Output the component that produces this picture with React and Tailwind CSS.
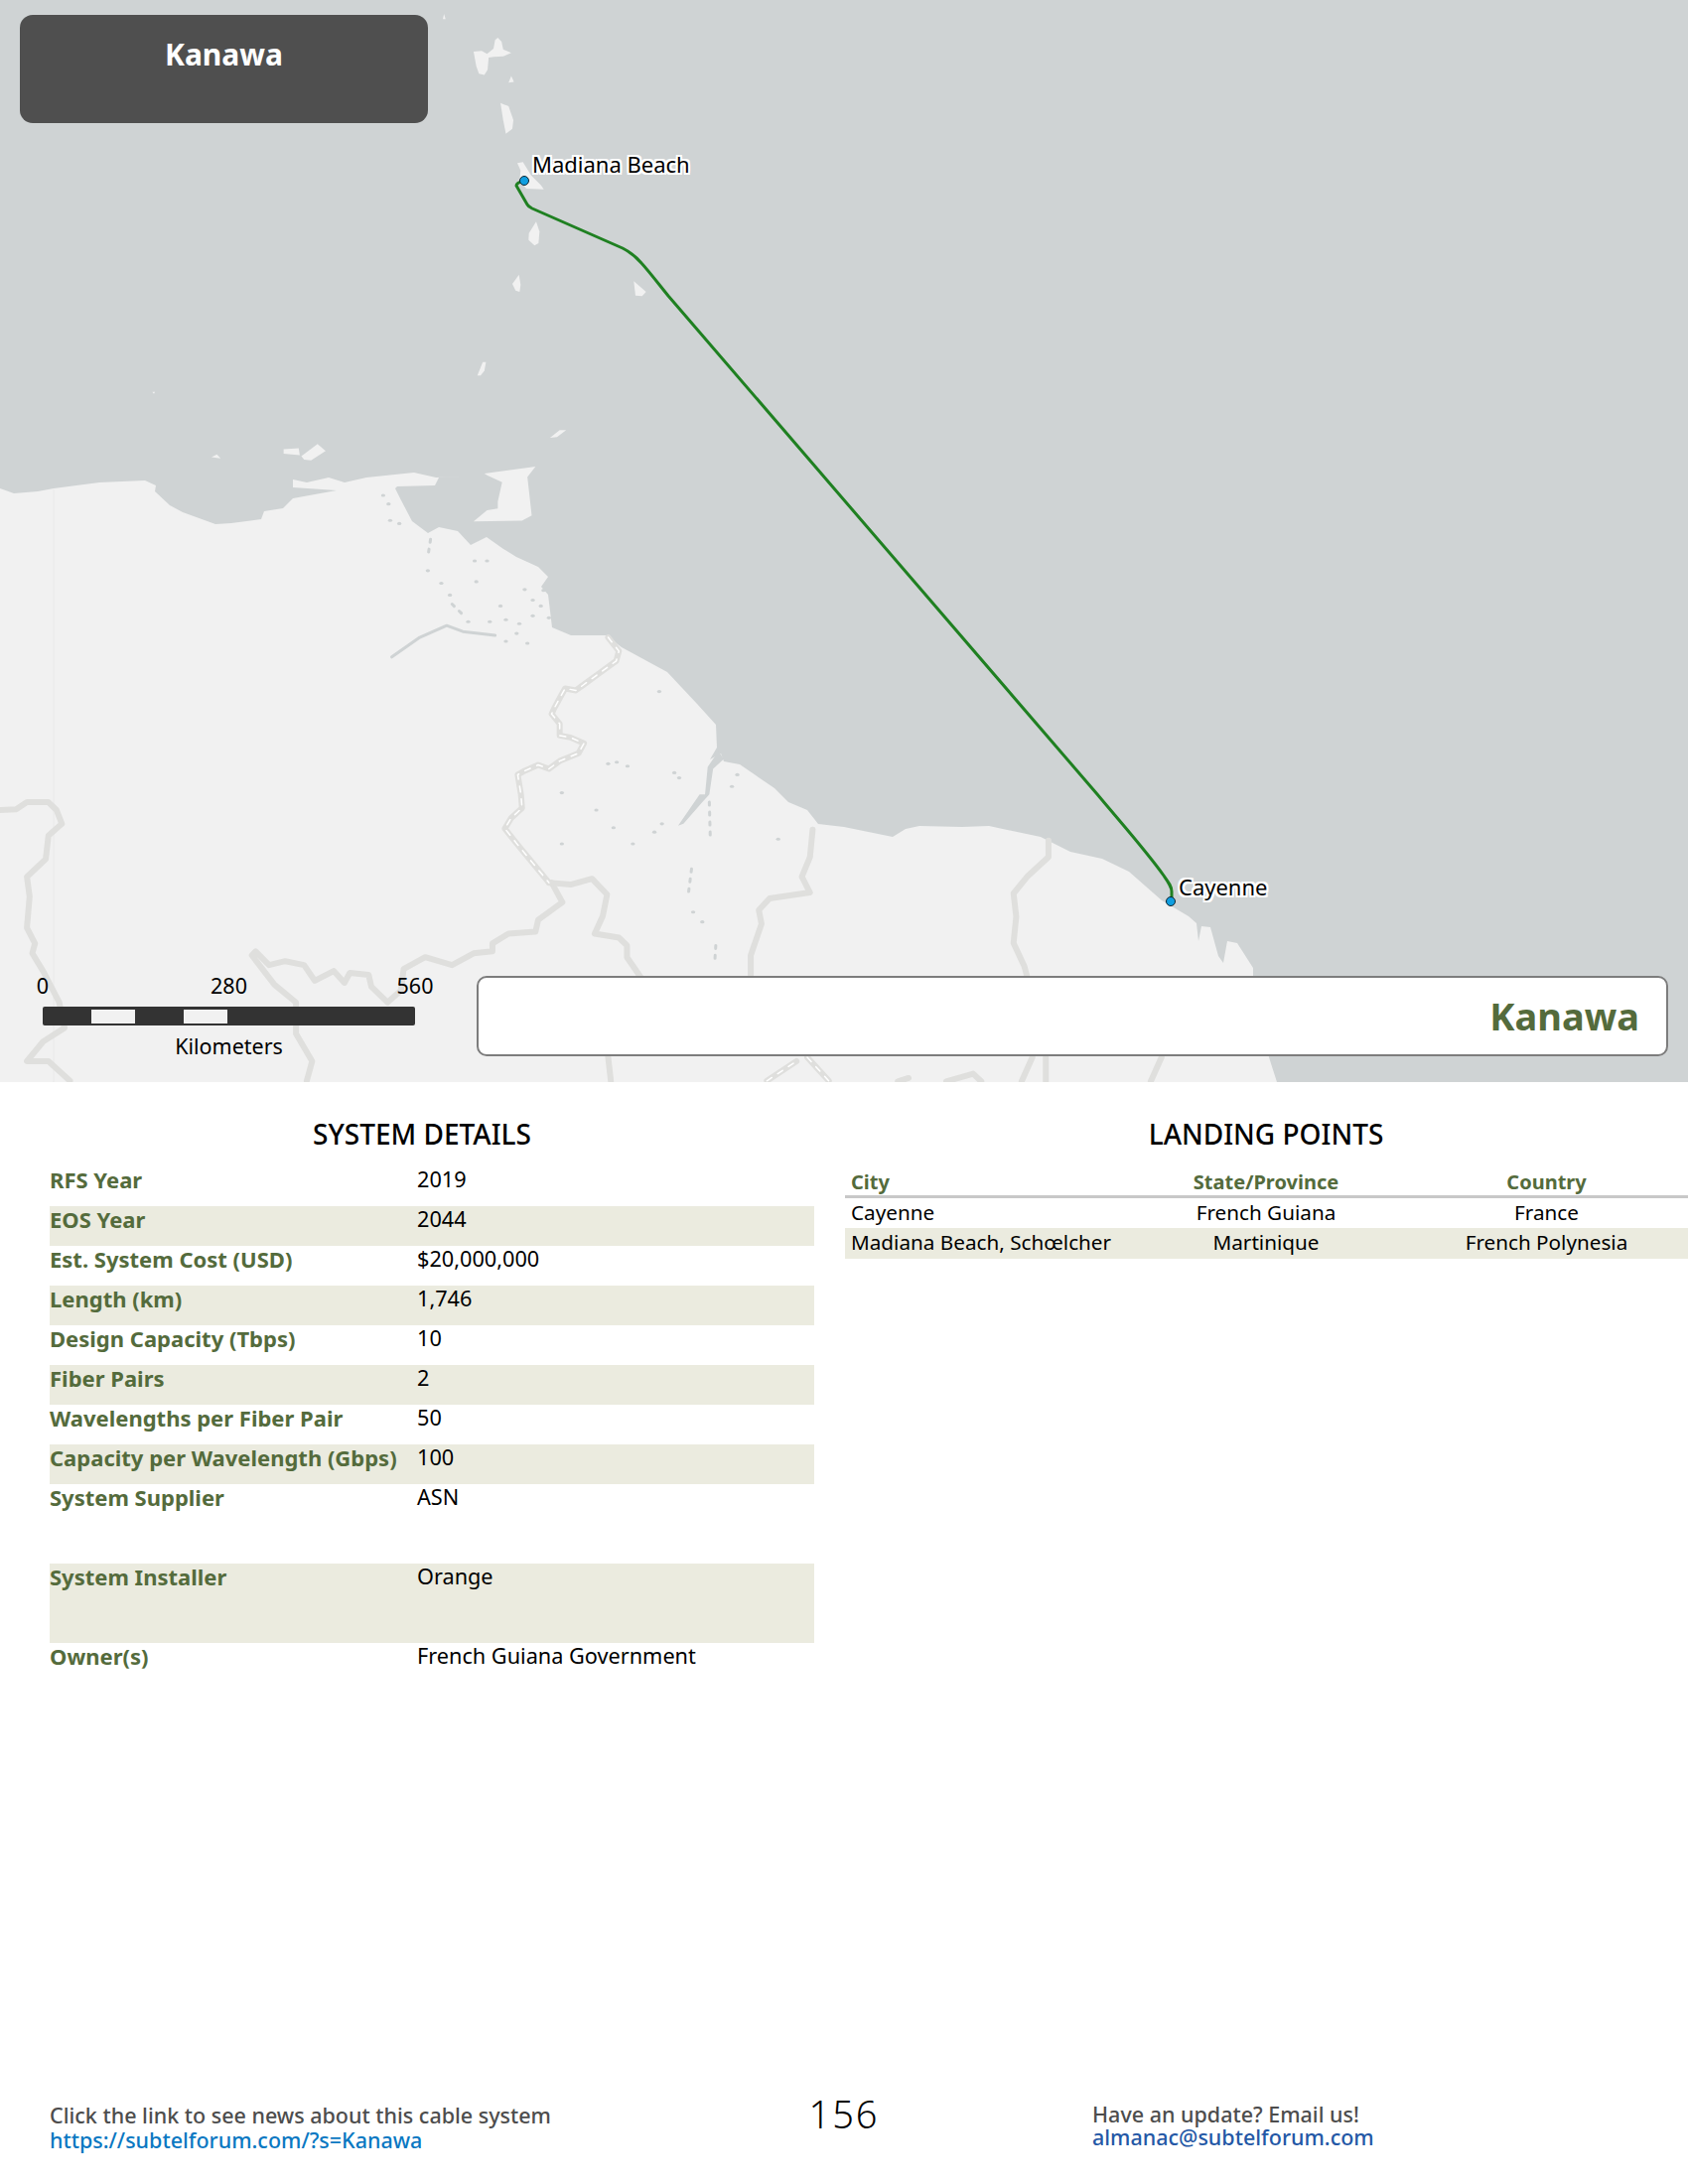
import React from 'react';

const FONT = "font-['Noto_Sans','Lato',sans-serif]";

// the drawn map is traced from three zoomed crops, so each group keeps the crop's own coordinates
const CROP_A = 'scale(0.542 0.3508)';
const CROP_B = 'translate(0 480) scale(0.542 0.3953)';
const CROP_C = 'translate(850 800) scale(0.542 0.3333)';
const CROP_D = 'translate(480 20) scale(0.3333)';

const SEA = '#cfd3d4';
const LAND = '#f1f1f1';
const BORDER = '#dfdfdd';

const mainland =
  'M0,492 L14,497 38,495 54,492 100,486 146,484 157,489 156,495 171,509 184,516 217,528 233,527 263,523 266,515 285,512 295,502 339,494 295,491 295,483 309,486 331,481 347,486 369,481 417,476 439,481 467,480 442,481 438,489 400,490 398,492 404,504 415,525 431,537 442,531 461,535 474,549 490,541 507,553 520,561 542,571 552,581 545,591 552,599 556,632 575,640 610,640 626,652 672,677 702,709 721,730 722,753 715,765 726,759 729,767 745,770 780,794 794,808 813,816 824,830 850,833 899,843 912,835 926,832 969,833 996,832 1048,843 1078,858 1110,865 1137,878 1170,907 1197,923 1205,930 1207,948 1210,933 1219,934 1227,963 1232,970 1236,948 1246,950 1262,975 1262,983 1278,1065 1286,1090 0,1090 Z';

const islandsA = [
  '825,40 828,55 823,55',
  '925,108 932,120 935,142 950,152 935,162 918,163 908,165 906,200 900,215 890,212 885,190 880,148 895,146 905,155 917,140 920,115',
  '950,218 955,235 945,237',
  '930,296 945,305 954,345 952,370 940,384 935,345',
  '1022,1257 1040,1235 1052,1235 1035,1255',
  '527,1290 555,1287 557,1307 527,1303',
  '560,1310 590,1275 605,1295 578,1322 565,1320',
  '393,1313 403,1305 410,1316',
  '887,1078 897,1040 903,1040 900,1065 893,1078',
  '900,1360 995,1340 980,1370 988,1480 970,1495 880,1497 905,1465 925,1460 925,1440 933,1385 905,1365',
  '283,1125 288,1125 286,1131',
];

const islandsD = [
  '123,433 140,430 165,470 195,500 203,512 150,510 130,485 133,455',
  '180,610 190,640 187,675 175,682 157,665 158,645',
  '128,770 133,800 130,822 118,818 108,798',
  '475,790 512,822 500,835 480,833',
];

const borders = [
  'M1025,1035 L1045,1085 1000,1130 995,1160 945,1165 915,1190 915,1210 880,1215 840,1245 790,1225 750,1255 745,1310 720,1340 690,1300 685,1270 650,1265 640,1290 620,1260 585,1285 565,1245 530,1235 500,1245 475,1210 468,1220 510,1295 550,1340 550,1420 580,1490 570,1540',
  'M0,850 L30,848 50,830 90,830 105,850 115,885 90,915 85,975 50,1020 55,1070 50,1150 65,1190 60,1215 80,1260 110,1340 120,1405 80,1440 50,1490 90,1490 130,1540',
  'M1020,1035 L1060,1040 1100,1025 1128,1065 1120,1120 1105,1165 1150,1175 1165,1195 1165,1225 1190,1275',
  'M1130,1480 L1135,1540',
  'M1510,900 L1505,970 1490,1020 1505,1060 1430,1075 1410,1105 1415,1140 1395,1220 1395,1270',
];

const dashedBorders = [
  'M1130,410 L1150,445 1145,470 1115,500 1085,530 1070,545 1050,540 1030,590 1025,605 1040,630 1040,660 1060,665 1085,680 1075,705 1040,725 1020,745 1000,735 975,750 962,760 968,810 970,845 950,870 938,897 960,935 990,985 1020,1035',
  'M1425,1540 L1480,1490',
  'M1500,1480 L1540,1540',
];

const bordersC = [
  'M380,140 L380,190 340,250 315,300 320,370 315,450 335,520 340,550',
  'M590,795 L570,868',
  'M350,795 L330,868',
  'M375,795 L375,868',
  'M100,868 L120,858',
  'M190,868 L240,845 255,868',
];

const deltaRivers = [
  'M728,460 L780,410 830,380 860,395 920,405',
  'M800,160 L795,205',
  'M840,325 L860,352',
  'M1318,830 L1320,930',
  'M1285,1000 L1278,1075',
  'M1330,1195 L1328,1240',
];

const specks = [
  [712, 48], [722, 70], [725, 112], [742, 120], [795, 240], [820, 272], [836, 302], [882, 215], [905, 215], [885, 268], [930, 330],
  [975, 288], [990, 315], [1010, 290], [1005, 330], [965, 375], [990, 355], [1020, 360], [940, 365], [910, 370], [870, 370], [960, 400],
  [940, 420], [980, 425], [1225, 548], [1130, 732], [1146, 728], [1166, 738], [1253, 755], [1262, 768], [1044, 806], [1108, 850], [1140, 895],
  [1216, 906], [1230, 885], [1044, 936], [1176, 936], [1446, 924], [1288, 1110], [1305, 1135], [1360, 790], [1370, 760],
];

const details = [
  { label: 'RFS Year', value: '2019' },
  { label: 'EOS Year', value: '2044' },
  { label: 'Est. System Cost (USD)', value: '$20,000,000' },
  { label: 'Length (km)', value: '1,746' },
  { label: 'Design Capacity (Tbps)', value: '10' },
  { label: 'Fiber Pairs', value: '2' },
  { label: 'Wavelengths per Fiber Pair', value: '50' },
  { label: 'Capacity per Wavelength (Gbps)', value: '100' },
  { label: 'System Supplier', value: 'ASN', tall: true },
  { label: 'System Installer', value: 'Orange', tall: true },
  { label: 'Owner(s)', value: 'French Guiana Government' },
];

const MapDrawing = () => (
  <svg viewBox="0 0 1700 1090" className="block w-full h-full">
    <rect width="1700" height="1090" fill={SEA} />
    <path d={mainland} fill={LAND} />
    <line x1="54" y1="493" x2="54" y2="1090" stroke="#e9e9e9" strokeWidth="1" />

    <g transform={CROP_A} fill={LAND}>
      {islandsA.map((points) => (
        <polygon key={points} points={points} />
      ))}
    </g>
    <g transform={CROP_D} fill={LAND}>
      {islandsD.map((points) => (
        <polygon key={points} points={points} />
      ))}
    </g>

    <g transform={CROP_B} fill="none" strokeLinejoin="round" strokeLinecap="round">
      <polygon
        points="1335,700 1315,740 1310,810 1300,810 1260,890 1270,885 1305,830 1318,810 1325,745 1345,720"
        fill={SEA}
      />
      {borders.map((d) => (
        <path key={d} d={d} stroke={BORDER} strokeWidth="6" vectorEffect="non-scaling-stroke" />
      ))}
      {dashedBorders.map((d) => (
        <g key={d}>
          <path d={d} stroke={BORDER} strokeWidth="6" vectorEffect="non-scaling-stroke" />
          <path d={d} stroke="#ffffff" strokeWidth="1.5" strokeDasharray="6 7" vectorEffect="non-scaling-stroke" />
        </g>
      ))}
      {deltaRivers.map((d, i) => (
        <path
          key={d}
          d={d}
          stroke={SEA}
          strokeWidth="3"
          strokeDasharray={i === 0 ? undefined : '3 7'}
          vectorEffect="non-scaling-stroke"
        />
      ))}
      {specks.map(([x, y]) => (
        <ellipse key={`${x}-${y}`} cx={x} cy={y} rx="4" ry="4" fill={SEA} />
      ))}
    </g>

    <g transform={CROP_C} fill="none" strokeLinejoin="round" strokeLinecap="round">
      {bordersC.map((d) => (
        <path key={d} d={d} stroke={BORDER} strokeWidth="6" vectorEffect="non-scaling-stroke" />
      ))}
    </g>

    <path
      d="M528,182 C524,183 520,185 520,187 L531,206 C532,208 534,209 536,210 L627,250 C635,254 640,258 646,265 C655,275 664,287 673,298 L1105,800 C1130,830 1155,858 1172,882 C1177,889 1180,893 1180,898 L1180,908"
      fill="none"
      stroke="#1f8021"
      strokeWidth="3"
      strokeLinejoin="round"
    />
    <circle cx="528" cy="182" r="4.5" fill="#0f9ee0" stroke="#10242f" strokeWidth="1" />
    <circle cx="1179" cy="908" r="4.5" fill="#0f9ee0" stroke="#10242f" strokeWidth="1" />
  </svg>
);

const ScaleBar = () => (
  <div className="absolute left-[23px] top-[978px] w-[415px] text-black text-[21.5px] leading-[30px]">
    <div className="flex justify-between h-[36px]">
      <span className="w-[40px] text-center">0</span>
      <span className="text-center">280</span>
      <span className="w-[40px] text-center">560</span>
    </div>
    <div className="mx-[20px] h-[19px] bg-[#333333] rounded-[2px] flex items-center pl-[49px] gap-[49px]">
      <div className="w-[44px] h-[14px] bg-[#f1f1f1]" />
      <div className="w-[44px] h-[14px] bg-[#f1f1f1]" />
    </div>
    <div className="mt-[6px] text-center">Kilometers</div>
  </div>
);

const DetailsTable = () => (
  <div className="ml-[50px] mr-[30px]">
    {details.map((row, i) => (
      <div
        key={row.label}
        className={`grid grid-cols-[370px_1fr] leading-[26px] ${row.tall ? 'h-20' : 'h-10'} ${i % 2 === 1 ? 'bg-[#ebebdf]' : ''}`}
      >
        <span className="text-[22px] font-bold text-[#546b3c]">{row.label}</span>
        <span className="text-[21.7px] text-black">{row.value}</span>
      </div>
    ))}
  </div>
);

const LandingTable = () => (
  <table className="w-[849px] ml-[1px] table-fixed border-separate border-spacing-0 text-[20.7px] leading-[26px] text-black">
    <thead>
      <tr className="text-[20px] text-[#546b3c]">
        <th className="w-[284px] h-[32px] pt-[3px] pl-[6px] border-b-[3px] border-[#c8c8c8] text-left font-bold align-top">City</th>
        <th className="w-[280px] h-[32px] pt-[3px] border-b-[3px] border-[#c8c8c8] text-center font-bold align-top">State/Province</th>
        <th className="h-[32px] pt-[3px] border-b-[3px] border-[#c8c8c8] text-center font-bold align-top">Country</th>
      </tr>
    </thead>
    <tbody>
      <tr className="h-[30px]">
        <td className="pl-[6px] pb-[2px]">Cayenne</td>
        <td className="pb-[2px] text-center">French Guiana</td>
        <td className="pb-[2px] text-center">France</td>
      </tr>
      <tr className="h-[31px] bg-[#ebebdf]">
        <td className="pl-[6px] pb-[3px]">Madiana Beach, Schœlcher</td>
        <td className="pb-[3px] text-center">Martinique</td>
        <td className="pb-[3px] text-center">French Polynesia</td>
      </tr>
    </tbody>
  </table>
);

const App = () => {
  return (
    <div className={`${FONT} relative w-[1700px] h-[2200px] bg-white flex flex-col overflow-hidden`}>
      <div className="relative h-[1090px] shrink-0">
        <MapDrawing />

        <div className="absolute left-[20px] top-[15px] w-[411px] h-[109px] rounded-[13px] bg-[#4f4f4f] pt-[22px] text-center text-white text-[30px] leading-[36px] font-bold">
          Kanawa
        </div>

        <span className="absolute left-[536px] top-[150px] text-[22px] leading-[30px] text-black [text-shadow:-2px_0_0_#fff,2px_0_0_#fff,0_-2px_0_#fff,0_2px_0_#fff,-2px_-2px_0_#fff,2px_2px_0_#fff,-2px_2px_0_#fff,2px_-2px_0_#fff]">
          Madiana Beach
        </span>
        <span className="absolute left-[1187px] top-[878px] text-[22px] leading-[30px] text-black [text-shadow:-2px_0_0_#fff,2px_0_0_#fff,0_-2px_0_#fff,0_2px_0_#fff,-2px_-2px_0_#fff,2px_2px_0_#fff,-2px_2px_0_#fff,2px_-2px_0_#fff]">
          Cayenne
        </span>

        <ScaleBar />

        <div className="absolute left-[480px] top-[983px] w-[1200px] h-[81px] rounded-[10px] border-2 border-[#7d7d7d] bg-white flex items-center justify-end pr-[27px] text-[38px] font-bold text-[#546b3c]">
          Kanawa
        </div>
      </div>

      <div className="grid grid-cols-2">
        <section>
          <h2 className="pt-[36px] mb-[17px] text-center text-[28px] leading-[32px] font-medium text-black">SYSTEM DETAILS</h2>
          <DetailsTable />
        </section>
        <section>
          <h2 className="pt-[36px] mb-[17px] text-center text-[28px] leading-[32px] font-medium text-black">LANDING POINTS</h2>
          <LandingTable />
        </section>
      </div>

      <footer className="mt-auto mb-[32px] flex items-start">
        <div className="ml-[50px] w-[740px] text-[21.5px] leading-[25px] font-medium">
          <p className="text-[#4d4d4d]">Click the link to see news about this cable system</p>
          <p className="text-[#0a78c2]">https://subtelforum.com/?s=Kanawa</p>
        </div>
        <div className="w-[120px] -mt-[11px] text-center text-[38px] leading-[44px] font-light tracking-[2px] text-black">156</div>
        <div className="ml-[190px] text-[21.5px] leading-[23px] font-medium">
          <p className="text-[#4d4d4d]">Have an update? Email us!</p>
          <p className="text-[#2458a6]">almanac@subtelforum.com</p>
        </div>
      </footer>
    </div>
  );
};

export default App;
